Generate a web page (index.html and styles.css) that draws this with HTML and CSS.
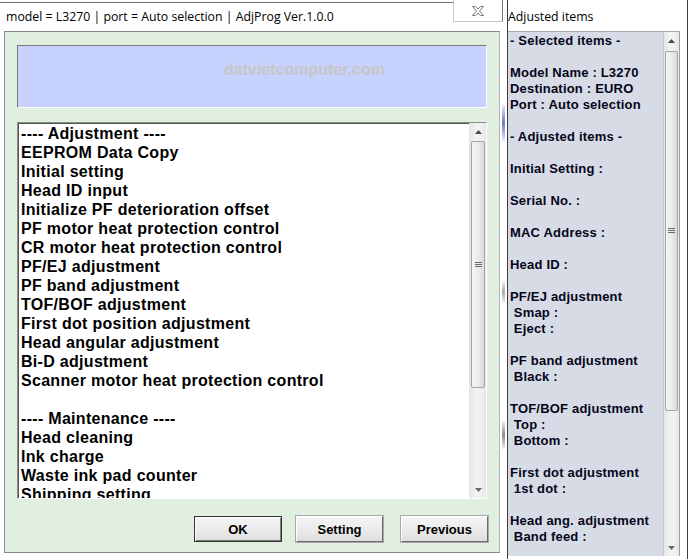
FILE: index.html
```html
<!DOCTYPE html>
<html>
<head>
<meta charset="utf-8">
<link rel="stylesheet" href="styles.css">
</head>
<body>
<div class="app">
  <div class="main">
    <div class="titlebar">
      <div class="titletext">model = L3270 | port = Auto selection | AdjProg Ver.1.0.0</div>
      <div class="close">
        <svg width="12" height="10" viewBox="0 0 12 10"><path d="M0.5 0.5h3l2.5 2.5 2.5-2.5h3l-4 4.5 4 4.5h-3l-2.5-2.5-2.5 2.5h-3l4-4.5z" fill="#fff" stroke="#7a7a7a" stroke-width="1" stroke-linejoin="round"/></svg>
      </div>
    </div>
    <div class="mainbody">
      <div class="panel">
        <div class="banner"><span class="watermark">datvietcomputer.com</span></div>
        <div class="listbox">
          <div class="list">
            <div class="item">---- Adjustment ----</div>
            <div class="item">EEPROM Data Copy</div>
            <div class="item">Initial setting</div>
            <div class="item">Head ID input</div>
            <div class="item">Initialize PF deterioration offset</div>
            <div class="item">PF motor heat protection control</div>
            <div class="item">CR motor heat protection control</div>
            <div class="item">PF/EJ adjustment</div>
            <div class="item">PF band adjustment</div>
            <div class="item">TOF/BOF adjustment</div>
            <div class="item">First dot position adjustment</div>
            <div class="item">Head angular adjustment</div>
            <div class="item">Bi-D adjustment</div>
            <div class="item">Scanner motor heat protection control</div>
            <div class="item"> </div>
            <div class="item">---- Maintenance ----</div>
            <div class="item">Head cleaning</div>
            <div class="item">Ink charge</div>
            <div class="item">Waste ink pad counter</div>
            <div class="item">Shipping setting</div>
          </div>
          <div class="vscroll">
            <div class="sb-btn"><svg width="7" height="4" viewBox="0 0 7 4"><path d="M0 4h7L3.5 0z" fill="#4a4a4a"/></svg></div>
            <div class="sb-track">
              <div class="sb-thumb thumb-list"><svg width="7" height="6" viewBox="0 0 7 6"><path d="M0 0.5h7M0 2.5h7M0 4.5h7" stroke="#6a6a6a" stroke-width="1"/></svg></div>
            </div>
            <div class="sb-btn"><svg width="7" height="4" viewBox="0 0 7 4"><path d="M0 0h7L3.5 4z" fill="#6a6a6a"/></svg></div>
          </div>
        </div>
        <div class="buttons">
          <button class="btn btn-default">OK</button>
          <button class="btn">Setting</button>
          <button class="btn btn-last">Previous</button>
        </div>
      </div>
      <div class="divider">
        <div class="mark mark-blue"></div>
        <div class="mark mark-gray1"></div>
        <div class="mark mark-gray2"></div>
      </div>
    </div>
  </div>
  <div class="side">
    <div class="side-title">Adjusted items</div>
    <div class="sidepanel">
      <div class="sidetext">- Selected items -

Model Name : L3270
Destination : EURO
Port : Auto selection

- Adjusted items -

Initial Setting :

Serial No. :

MAC Address :

Head ID :

PF/EJ adjustment
 Smap :
 Eject :

PF band adjustment
 Black :

TOF/BOF adjustment
 Top :
 Bottom :

First dot adjustment
 1st dot :

Head ang. adjustment
 Band feed :</div>
      <div class="vscroll">
        <div class="sb-btn"><svg width="7" height="4" viewBox="0 0 7 4"><path d="M0 4h7L3.5 0z" fill="#4a4a4a"/></svg></div>
        <div class="sb-track">
          <div class="sb-thumb thumb-side"><svg width="7" height="6" viewBox="0 0 7 6"><path d="M0 0.5h7M0 2.5h7M0 4.5h7" stroke="#6a6a6a" stroke-width="1"/></svg></div>
        </div>
        <div class="sb-btn"><svg width="7" height="4" viewBox="0 0 7 4"><path d="M0 0h7L3.5 4z" fill="#6a6a6a"/></svg></div>
      </div>
    </div>
  </div>
</div>
</body>
</html>
```
FILE: styles.css
```css
* { box-sizing: border-box; }
html, body { margin: 0; padding: 0; }
body {
  width: 688px;
  height: 559px;
  background: #fff;
  overflow: hidden;
  font-family: "Liberation Sans", Arial, sans-serif;
}
.app { display: flex; height: 559px; }

.main { width: 507px; display: flex; flex-direction: column; }
.titlebar { height: 31px; display: flex; align-items: flex-start; }
.titletext {
  flex: 1;
  margin-top: 2px;
  border-top: 1px solid #6d6d6d;
  padding: 6px 0 0 6px;
  font-family: "Open Sans", "Noto Sans", sans-serif;
  font-size: 12.3px;
  line-height: 16px;
  color: #000;
  white-space: nowrap;
}
.close {
  width: 50px;
  height: 22px;
  margin-right: 4px;
  border: 1px solid #c8c8c8;
  border-top: none;
  border-right: 1px solid #777;
  display: flex;
  align-items: center;
  justify-content: center;
  background: #fff;
}

.mainbody { flex: 1; display: flex; }
.panel {
  margin-left: 4px;
  width: 496px;
  height: 522px;
  background: #e1efe1;
  border: 1px solid #8a8a8a;
  border-right-color: #b4b4b4;
  padding: 13px 12px 0 12px;
  display: flex;
  flex-direction: column;
}
.banner {
  height: 63px;
  background: #c8d2fe;
  border: 1px solid #fff;
  border-top-color: #7a7a7a;
  border-left-color: #7a7a7a;
  padding: 15px 0 0 206px;
}
.watermark {
  font-weight: bold;
  font-size: 16px;
  line-height: 16px;
  color: #c6c6c6;
}
.listbox {
  margin-top: 14px;
  height: 377px;
  background: #fff;
  border: 1px solid #fff;
  border-top-color: #8a8a8a;
  border-left-color: #8a8a8a;
  box-shadow: inset 1px 1px 0 #555;
  display: flex;
}
.list {
  flex: 1;
  overflow: hidden;
  padding: 1px 0 0 3px;
}
.item {
  font-weight: bold;
  font-size: 16px;
  letter-spacing: 0.3px;
  line-height: 19px;
  height: 19px;
  white-space: pre;
  color: #000;
}

.vscroll {
  width: 17px;
  display: flex;
  flex-direction: column;
  background: linear-gradient(to right, #e6e6e6, #f3f3f3 40%, #f0f0f0 70%, #e6e6e6);
  border-left: 1px solid #e4e4e4;
}
.sb-btn {
  height: 17px;
  display: flex;
  align-items: center;
  justify-content: center;
}
.sb-track { flex: 1; padding: 0 1px; }
.sb-thumb {
  border: 1px solid #a4a4a4;
  border-radius: 2px;
  background: linear-gradient(to right, #f5f5f5, #ececec 50%, #dadada);
  display: flex;
  align-items: center;
  justify-content: center;
}
.thumb-list { height: 247px; margin-top: 1px; }
.thumb-side { height: 360px; margin-top: 2px; }

.buttons {
  margin-top: 17px;
  display: flex;
  justify-content: flex-end;
  gap: 14px;
  padding-right: 0;
}
.btn {
  width: 87px;
  height: 26px;
  margin: 0;
  padding: 0;
  font-family: "Liberation Sans", Arial, sans-serif;
  font-weight: bold;
  font-size: 13px;
  color: #000;
  background: linear-gradient(#f4f4f4, #ebebeb 50%, #dedede);
  border: 1px solid #fff;
  border-right-color: #6a6a6a;
  border-bottom-color: #6a6a6a;
  box-shadow: 0 0 0 1px #a8a8a8;
}
.btn-default { width: 88px; border: 1px solid #333; box-shadow: inset 1px 1px 0 #fff, inset -1px -1px 0 #7a7a7a; }
.btn-last { margin-left: 4px; margin-right: -1px; }

.divider {
  width: 7px;
  display: flex;
  flex-direction: column;
  padding-left: 2px;
}
.mark { width: 3px; }
.mark-blue { margin-top: 74px; height: 36px; background: linear-gradient(#e9ecfb, #6e78c8 50%, #e9ecfb); }
.mark-gray1 { margin-top: 140px; height: 22px; background: linear-gradient(#f0f0f0, #a8a8a8 50%, #f0f0f0); }
.mark-gray2 { margin-top: 118px; height: 28px; background: linear-gradient(#f0f0f0, #8c8c8c 50%, #f0f0f0); }

.side {
  width: 181px;
  border-left: 1px solid #3c3c3c;
  border-right: 1px solid #3c3c3c;
  display: flex;
  flex-direction: column;
}
.side-title {
  height: 31px;
  padding-top: 9px;
  font-family: "Open Sans", "Noto Sans", sans-serif;
  font-size: 12.3px;
  line-height: 16px;
  color: #000;
  white-space: nowrap;
}
.sidepanel {
  height: 525px;
  width: 172px;
  background: #d7dbe5;
  border-top: 1px solid #a8a8a8;
  display: flex;
}
.sidetext {
  flex: 1;
  overflow: hidden;
  padding: 1px 0 0 2px;
  font-weight: bold;
  font-size: 13px;
  letter-spacing: 0.2px;
  line-height: 16px;
  white-space: pre;
  color: #05051a;
}
.sidepanel .vscroll { border-left: 1px solid #c8c8c8; border-right: 1px solid #a0a0a0; }
```
